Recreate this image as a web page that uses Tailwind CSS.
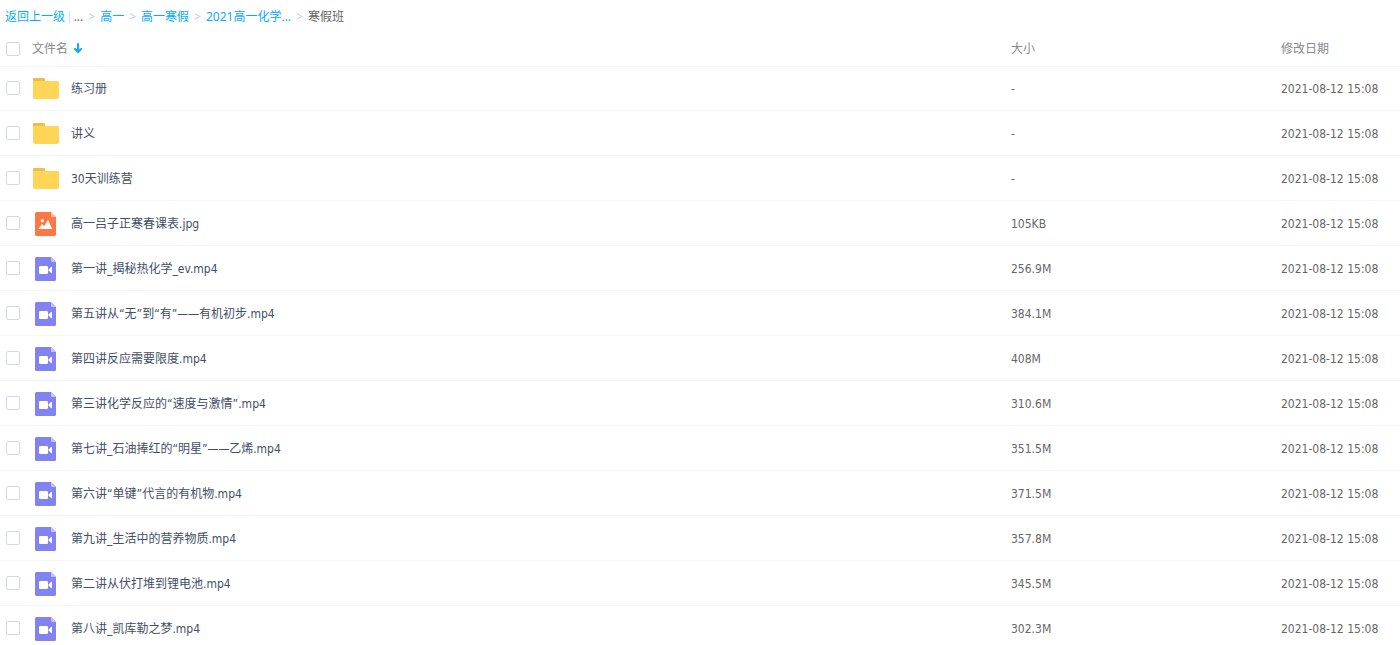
<!DOCTYPE html>
<html lang="zh-CN">
    <head>
        <meta charset="UTF-8">
        <meta name="viewport" content="width=device-width, initial-scale=1.0">
        <title>寒假班</title>
        <script src="https://cdn.jsdelivr.net/npm/@tailwindcss/browser@4"></script>
    </head>
    <body class="bg-white text-xs text-[#666] font-['DejaVu_Sans_Condensed','Noto_Sans_CJK_SC',sans-serif]">

        <!-- BREADCRUMB -->
        <nav class="flex items-center h-8 pt-0.5 pl-[5px] whitespace-nowrap font-['Noto_Sans','Noto_Sans_CJK_SC',sans-serif]">
            <a href="#" class="text-[#09aaff]">返回上一级</a>
            <span class="mx-px text-[#c4dbfe]">|</span>
            <span>...</span>
            <span class="mx-[5px] text-[#b9cfe8]">&gt;</span>
            <a href="#" class="text-[#09aaff]">高一</a>
            <span class="mx-[5px] text-[#b9cfe8]">&gt;</span>
            <a href="#" class="text-[#09aaff]">高一寒假</a>
            <span class="mx-[5px] text-[#b9cfe8]">&gt;</span>
            <a href="#" class="text-[#09aaff]">2021高一化学...</a>
            <span class="mx-[5px] text-[#b9cfe8]">&gt;</span>
            <span>寒假班</span>
        </nav>
        <!-- /BREADCRUMB -->

        <!-- Shared icons -->
        <svg class="hidden">
            <symbol id="folder" viewBox="0 0 26 26">
                <path d="M0 4a1 1 0 0 1 1-1h10a1 1 0 0 1 1 1v5H0z" fill="#ecbf4c"/>
                <path d="M0 6h25a1 1 0 0 1 1 1v15a2 2 0 0 1-2 2H2a2 2 0 0 1-2-2z" fill="#ffd558"/>
            </symbol>
            <symbol id="image" viewBox="0 0 26 26">
                <path d="M3.5 2H18l5 5v17.500a1.500 1.500 0 0 1-1.500 1.500h-18A1.500 1.500 0 0 1 2 24.500v-21A1.500 1.500 0 0 1 3.500 2z" fill="#ff7744"/>
                <path d="M18 2l5 5h-4a1 1 0 0 1-1-1z" fill="#ffc0a8"/>
                <circle cx="9.4" cy="10.7" r="1.6" fill="#fff"/>
                <path d="M5.6 19l3-4.6q.6-.8 1.2 0l1.4 1.9 3.1-5.5q.6-1 1.2 0L19.2 19z" fill="#fff"/>
            </symbol>
            <symbol id="video" viewBox="0 0 26 26">
                <path d="M3.5 2H18l5 5v17.500a1.500 1.500 0 0 1-1.500 1.500h-18A1.500 1.500 0 0 1 2 24.500v-21A1.500 1.500 0 0 1 3.500 2z" fill="#8282f0"/>
                <path d="M18 2l5 5h-4a1 1 0 0 1-1-1z" fill="#c3c3f9"/>
                <rect x="6" y="11" width="9" height="8" rx="1.2" fill="#fff"/>
                <path d="M15.6 14.4L18 11.9q1-.6 1 .3v5.6q0 .9-1 .3l-2.4-2.5z" fill="#fff"/>
            </symbol>
        </svg>

        <!-- FILE LIST -->
        <table class="w-full table-fixed border-separate border-spacing-0 text-left">
            <thead>
                <tr class="h-[34px] text-[#888]">
                    <th class="p-0 pl-[6px] font-normal">
                        <div class="flex items-center">
                            <input type="checkbox" aria-label="全选" class="appearance-none size-[14px] shrink-0 rounded-xs border border-[#d4dae4] checked:bg-[#09aaff]">
                            <button type="button" class="ml-3 flex items-center gap-[6px]">
                                文件名
                                <svg class="mb-0.5 w-2 h-[10px]" viewBox="0 0 8 10" fill="none" stroke="#09aaff" stroke-width="2" stroke-linecap="round" stroke-linejoin="round"><path d="M4 1v7.6M1 6l3 3 3-3"/></svg>
                            </button>
                        </div>
                    </th>
                    <th class="w-[270px] p-0 font-normal">大小</th>
                    <th class="w-[119px] p-0 font-normal">修改日期</th>
                </tr>
            </thead>
            <tbody id="files">

                <!-- rows are added by the script below -->

            </tbody>
        </table>
        <!-- /FILE LIST -->

        <script>
            // Folder content
            const files = [
                {icon: 'folder', name: '练习册', size: '-'},
                {icon: 'folder', name: '讲义', size: '-'},
                {icon: 'folder', name: '30天训练营', size: '-'},
                {icon: 'image', name: '高一吕子正寒春课表.jpg', size: '105KB'},
                {icon: 'video', name: '第一讲_揭秘热化学_ev.mp4', size: '256.9M'},
                {icon: 'video', name: '第五讲从“无”到“有”——有机初步.mp4', size: '384.1M'},
                {icon: 'video', name: '第四讲反应需要限度.mp4', size: '408M'},
                {icon: 'video', name: '第三讲化学反应的“速度与激情”.mp4', size: '310.6M'},
                {icon: 'video', name: '第七讲_石油捧红的“明星”——乙烯.mp4', size: '351.5M'},
                {icon: 'video', name: '第六讲“单键”代言的有机物.mp4', size: '371.5M'},
                {icon: 'video', name: '第九讲_生活中的营养物质.mp4', size: '357.8M'},
                {icon: 'video', name: '第二讲从伏打堆到锂电池.mp4', size: '345.5M'},
                {icon: 'video', name: '第八讲_凯库勒之梦.mp4', size: '302.3M'}
            ];
            const modified = '2021-08-12 15:08';

            // Create rows
            for (const file of files) {
                const row = document.createElement('tr');
                row.className = 'h-[45px] first:shadow-[inset_0_1px_#f2f6fd] hover:bg-[#f4fbff]';
                row.innerHTML = `
                    <td class="border-b border-[#f2f6fd] p-0 pl-[6px]">
                        <div class="flex items-center">
                            <input type="checkbox" aria-label="${file.name}" class="appearance-none size-[14px] shrink-0 rounded-xs border border-[#d4dae4] checked:bg-[#09aaff]">
                            <svg class="ml-[13px] size-[26px] shrink-0"><use href="#${file.icon}"/></svg>
                            <a href="#" class="ml-3 pt-0.5 truncate text-[#424e67]">${file.name}</a>
                        </div>
                    </td>
                    <td class="border-b border-[#f2f6fd] p-0 pt-0.5">${file.size}</td>
                    <td class="border-b border-[#f2f6fd] p-0 pt-0.5 whitespace-nowrap">${modified}</td>`;
                document.querySelector('#files').appendChild(row);
            }
        </script>
    </body>
</html>
